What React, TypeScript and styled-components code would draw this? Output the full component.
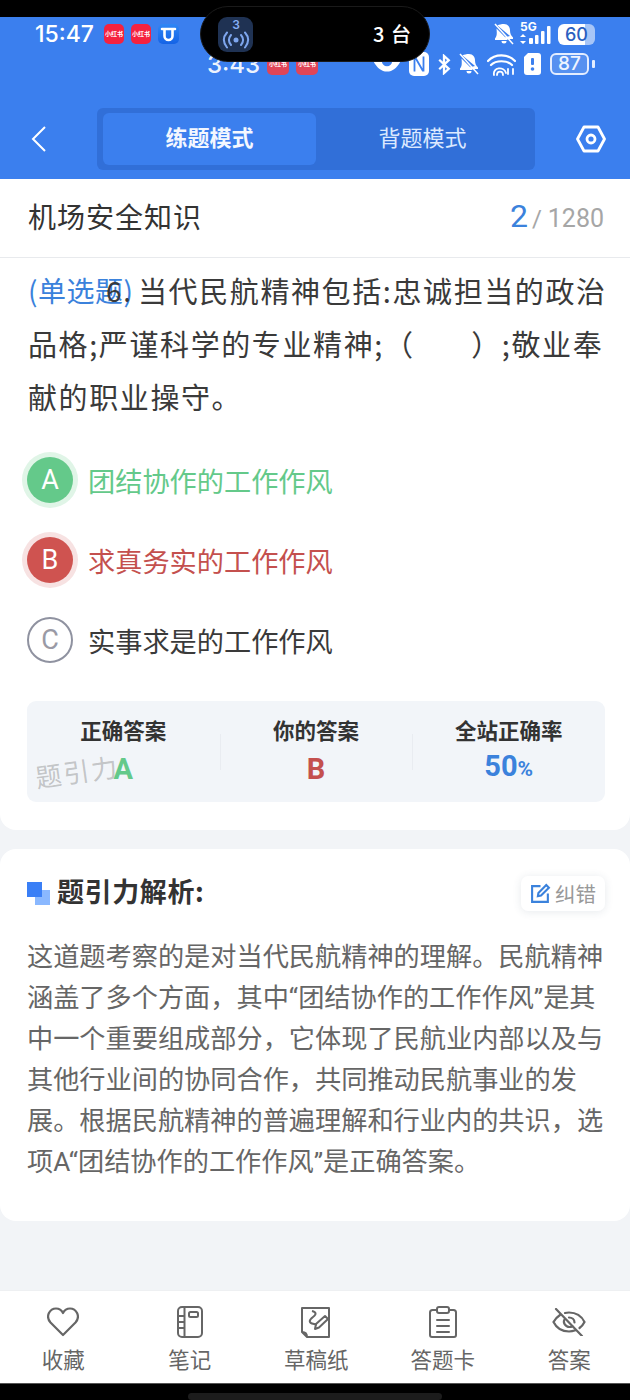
import React from "react";
import styled, { createGlobalStyle } from "styled-components";

const cjk = `"Noto Sans CJK SC", "Noto Sans", sans-serif`;

const GlobalStyle = createGlobalStyle`
  html, body {
    margin: 0;
    padding: 0;
    background: #f2f4f7;
  }
  * { box-sizing: border-box; }
`;

const Page = styled.div`
  position: relative;
  width: 630px;
  height: 1400px;
  overflow: hidden;
  background: #f2f4f7;
  font-family: ${cjk};
  display: flex;
  flex-direction: column;
`;

const TopBlack = styled.div`
  height: 17px;
  background: #000;
  flex: none;
`;

const Header = styled.header`
  height: 162px;
  flex: none;
  background: #3b7fee;
  display: flex;
  flex-direction: column;
  color: #fff;
`;

const StatusRow = styled.div`
  height: 34px;
  display: flex;
  align-items: center;
  justify-content: space-between;
  padding: 0 35px 0 35px;
`;

const StatusGroup = styled.div<{ $gap?: number }>`
  display: flex;
  align-items: center;
  gap: ${(p) => p.$gap ?? 7}px;
`;

const Clock = styled.span`
  font-family: Inter, Roboto, sans-serif;
  font-size: 23px;
  font-weight: 500;
  margin-right: 3px;
`;

const AppBadge = styled.span<{ $dim?: boolean }>`
  width: ${(p) => (p.$dim ? 22 : 20)}px;
  height: ${(p) => (p.$dim ? 22 : 20)}px;
  border-radius: 5px;
  background: ${(p) => (p.$dim ? "#e04558" : "#f5223f")};
  color: #fff;
  font-size: 6px;
  font-weight: 700;
  line-height: ${(p) => (p.$dim ? 22 : 20)}px;
  text-align: center;
  white-space: nowrap;
  overflow: hidden;
  flex: none;
`;

const ToolBadge = styled.span`
  width: 21px;
  height: 20px;
  border-radius: 5px;
  background: linear-gradient(180deg, #2f86f5, #1463e6);
  display: flex;
  align-items: center;
  justify-content: center;
  flex: none;
`;

const BatteryPill = styled.span`
  width: 37px;
  height: 21px;
  border-radius: 6px;
  background: linear-gradient(90deg, #fff 0 72%, rgba(255, 255, 255, 0.55) 72%);
  color: #2b5fc0;
  font-size: 18px;
  font-weight: 500;
  font-family: Inter, Roboto, sans-serif;
  line-height: 21px;
  text-align: center;
`;

const GhostRow = styled.div`
  height: 26px;
  display: flex;
  align-items: center;
  justify-content: space-between;
  padding: 0 35px 0 207px;
`;

const GhostClock = styled.span`
  font-family: Inter, Roboto, sans-serif;
  font-size: 24px;
  font-weight: 500;
  color: rgba(255, 255, 255, 0.92);
`;

const OutlineBattery = styled.span`
  width: 39px;
  height: 22px;
  border: 2px solid #e3edff;
  border-radius: 6px;
  background: rgba(255, 255, 255, 0.14);
  color: #eef4ff;
  font-size: 19px;
  font-weight: 500;
  font-family: Inter, Roboto, sans-serif;
  line-height: 18px;
  text-align: center;
  margin-left: 1px;
`;

const BatteryCap = styled.span`
  width: 3px;
  height: 8px;
  background: #e3edff;
  border-radius: 1px;
  margin-left: -5px;
`;

const Island = styled.div`
  position: absolute;
  left: 200px;
  top: 6px;
  width: 230px;
  height: 56px;
  border-radius: 28px;
  background: #000;
  border: 1px solid #1a1a1a;
  display: flex;
  align-items: center;
  justify-content: space-between;
  padding: 0 17px 0 17px;
`;

const IslandIcon = styled.div`
  width: 35px;
  height: 35px;
  border-radius: 9px;
  background: #1f3253;
  display: flex;
  align-items: center;
  justify-content: center;
`;

const IslandText = styled.span`
  color: #fff;
  font-size: 20px;
  font-weight: 500;
  letter-spacing: 1px;
  line-height: 24px;
`;

const NavBar = styled.div`
  margin-top: 31px;
  height: 62px;
  display: flex;
  align-items: center;
  padding: 0 22px 0 31px;
`;

const BackButton = styled.div`
  width: 66px;
  display: flex;
  align-items: center;
`;

const ModeTabs = styled.div`
  width: 438px;
  height: 62px;
  padding: 5px 6px;
  border-radius: 6px;
  background: #316fd8;
  display: flex;
`;

const ModeTab = styled.div<{ $active?: boolean }>`
  flex: 1;
  border-radius: 6px;
  padding-bottom: 7px;
  background: ${(p) => (p.$active ? "#3b7fee" : "transparent")};
  color: ${(p) => (p.$active ? "#f3f7ff" : "#dce9ff")};
  font-size: 22px;
  font-weight: ${(p) => (p.$active ? 700 : 400)};
  display: flex;
  align-items: center;
  justify-content: center;
`;

const SettingButton = styled.div`
  margin-left: 41px;
  display: flex;
`;

const QuestionCard = styled.section`
  flex: none;
  height: 651px;
  background: #fff;
  border-radius: 0 0 16px 16px;
  display: flex;
  flex-direction: column;
`;

const TitleRow = styled.div`
  height: 79px;
  flex: none;
  border-bottom: 1px solid #e8eaed;
  display: flex;
  align-items: center;
  justify-content: space-between;
  padding: 0 26px 4px 28px;
`;

const Title = styled.h1`
  margin: 0;
  font-size: 28px;
  font-weight: 400;
  letter-spacing: 1px;
  color: #333;
`;

const Progress = styled.div`
  display: flex;
  align-items: baseline;
  color: #a6a6a6;
  font-family: Roboto, sans-serif;
  font-size: 25px;
`;

const ProgressNow = styled.span`
  color: #3b82dc;
  font-size: 32px;
  margin-right: 4px;
`;

const ProgressSlash = styled.span`
  font-size: 24px;
  margin-right: 6px;
`;

const QuestionText = styled.div`
  position: relative;
  margin: 6px 0 0;
  padding: 0 0 0 28px;
  font-size: 29px;
  letter-spacing: 1.6px;
  line-height: 53px;
  color: #3a3a3a;
  white-space: nowrap;
`;

const QuestionType = styled.span`
  position: absolute;
  left: 28px;
  top: 0;
  font-size: 28px;
  letter-spacing: 0.5px;
  color: #3b82dc;
`;

const QuestionNo = styled.span`
  position: absolute;
  left: 106px;
  top: 0;
  font-size: 28px;
`;

const QuestionLine = styled.span<{ $first?: boolean }>`
  display: block;
  padding-left: ${(p) => (p.$first ? "110px" : "0")};
`;

const OptionList = styled.div`
  margin-top: 34px;
  padding-left: 27px;
  display: flex;
  flex-direction: column;
  gap: 35px;
`;

const OptionRow = styled.div`
  height: 45px;
  display: flex;
  align-items: center;
  gap: 15px;
`;

type Tone = "right" | "wrong" | "plain";

const circleBg: Record<Tone, string> = { right: "#64c98a", wrong: "#cf5350", plain: "#fff" };
const circleRing: Record<Tone, string> = { right: "#e0f5e7", wrong: "#f7e2e2", plain: "transparent" };
const optionColor: Record<Tone, string> = { right: "#64c98a", wrong: "#c4504e", plain: "#3a3a3a" };

const OptionCircle = styled.span<{ $tone: Tone }>`
  width: 46px;
  height: 46px;
  border-radius: 50%;
  flex: none;
  background: ${(p) => circleBg[p.$tone]};
  box-shadow: 0 0 0 5px ${(p) => circleRing[p.$tone]};
  border: ${(p) => (p.$tone === "plain" ? "2px solid #8f92a0" : "none")};
  color: ${(p) => (p.$tone === "plain" ? "#9a9aa5" : "#fff")};
  font-family: Roboto, sans-serif;
  font-size: 27px;
  display: flex;
  align-items: center;
  justify-content: center;
`;

const OptionText = styled.span<{ $tone: Tone }>`
  font-size: 27.2px;
  line-height: 42px;
  color: ${(p) => optionColor[p.$tone]};
`;

const Summary = styled.div`
  position: relative;
  margin: 39px 25px 0 27px;
  height: 101px;
  background: #f2f5f9;
  border-radius: 9px;
  display: grid;
  grid-template-columns: repeat(3, 1fr);
  align-items: center;
`;

const SummaryCell = styled.div<{ $divider?: boolean }>`
  position: relative;
  height: 66px;
  margin-top: -2px;
  display: flex;
  flex-direction: column;
  align-items: center;
  justify-content: space-between;
  &::before {
    content: "";
    display: ${(p) => (p.$divider ? "block" : "none")};
    position: absolute;
    left: 0;
    top: 16px;
    width: 1px;
    height: 36px;
    background: #e9ecf1;
  }
`;

const SummaryLabel = styled.span`
  font-size: 21.5px;
  line-height: 24px;
  font-weight: 700;
  color: #333;
`;

const SummaryValue = styled.span<{ $color: string }>`
  font-family: Roboto, sans-serif;
  font-size: 29px;
  line-height: 30px;
  font-weight: 700;
  color: ${(p) => p.$color};
  small {
    font-size: 21px;
    font-weight: 700;
  }
`;

const Watermark = styled.span`
  position: absolute;
  left: 8px;
  top: 54px;
  font-size: 26px;
  line-height: 32px;
  letter-spacing: 2px;
  color: rgba(120, 120, 120, 0.4);
  transform: rotate(-8deg);
  pointer-events: none;
`;

const AnalysisCard = styled.section`
  margin-top: 19px;
  flex: none;
  height: 372px;
  background: #fff;
  border-radius: 16px;
  padding: 26px 25px 0 27px;
`;

const AnalysisHead = styled.div`
  height: 36px;
  display: flex;
  align-items: center;
`;

const HeadMark = styled.span`
  position: relative;
  width: 23px;
  height: 23px;
  margin-right: 7px;
  flex: none;
  &::before {
    content: "";
    position: absolute;
    right: 0;
    bottom: 0;
    width: 15px;
    height: 15px;
    background: #8ab8ff;
  }
  &::after {
    content: "";
    position: absolute;
    left: 0;
    top: 0;
    width: 15px;
    height: 15px;
    background: #3a7ff6;
  }
`;

const AnalysisTitle = styled.h2`
  margin: 0;
  flex: 1;
  padding-bottom: 4px;
  font-size: 27px;
  line-height: 32px;
  font-weight: 700;
  letter-spacing: 0.6px;
  color: #333;
`;

const ReportButton = styled.div`
  width: 84px;
  height: 35px;
  border-radius: 7px;
  background: #fff;
  box-shadow: 0 1px 8px rgba(60, 80, 110, 0.12);
  display: flex;
  align-items: center;
  justify-content: center;
  gap: 4px;
  color: #999;
  font-size: 20.5px;
`;

const AnalysisBody = styled.p`
  margin: 26px 0 0;
  font-family: Roboto, ${cjk};
  font-size: 26.2px;
  line-height: 41px;
  color: #666;
`;

const Spacer = styled.div`
  flex: 1;
`;

const TabBar = styled.nav`
  flex: none;
  height: 93px;
  background: #fff;
  border-top: 1px solid #eef0f2;
  display: grid;
  grid-template-columns: repeat(5, 126.5px);
`;

const TabItem = styled.div`
  display: flex;
  flex-direction: column;
  align-items: center;
  padding-top: 14px;
  color: #666;
  font-size: 21.5px;
  line-height: 28px;
`;

const TabIcon = styled.span`
  height: 33px;
  margin-bottom: 7px;
  display: flex;
  align-items: center;
  justify-content: center;
`;

const BottomBlack = styled.div`
  position: relative;
  flex: none;
  height: 17px;
  background: #000;
  border-top: 1px solid #555;
`;

const HomeBar = styled.div`
  position: absolute;
  left: 188px;
  top: 9px;
  width: 254px;
  height: 7px;
  border-radius: 4px;
  background: #1c1c1c;
`;

const BellOff = () => (
  <svg width="20" height="22" viewBox="0 0 20 22" fill="#fff">
    <path d="M10 1c4 0 6 3 6 6.500 0 3 1 5 3 7v1.500H4.500L16 13 3.500 2.500C5 1.500 7.500 1 10 1zM2.500 5.500 14 17H1v-1.500c2-2 2-5 1.500-10z" />
    <path d="M7.500 18h5a2.500 2.500 0 0 1-5 0z" />
    <path d="M1 1l18 20" stroke="#fff" strokeWidth="1.500" />
  </svg>
);

const Signal = () => (
  <svg width="32" height="26" viewBox="0 0 32 26" fill="#fff" style={{ overflow: "visible" }}>
    <text x="0" y="10" fontSize="12" fontWeight="700" fontFamily="Inter, sans-serif">5G</text>
    <path d="M3 13l3 3H0zM3 23l3-3H0z" />
    <rect x="9" y="17" width="4" height="6" rx="1" />
    <rect x="15" y="14" width="3.500" height="9" rx="1" />
    <rect x="21" y="10" width="3.500" height="13" rx="1" />
    <rect x="27" y="5" width="3.500" height="18" rx="1" />
  </svg>
);

const ChainIcon = () => (
  <svg width="17" height="17" viewBox="0 0 17 17" fill="none" stroke="#fff" strokeWidth="2.600" strokeLinecap="round">
    <path d="M2 3h13M4.500 3v7a4 4 0 0 0 8 0V3" />
  </svg>
);

const BroadcastIcon = () => (
  <svg width="30" height="33" viewBox="0 0 30 33" fill="none" stroke="#7ea6ee" strokeWidth="2" strokeLinecap="round">
    <text x="15" y="10.500" textAnchor="middle" fontSize="12" fontWeight="600" fill="#86aef5" stroke="none" fontFamily="Inter, sans-serif">3</text>
    <circle cx="15" cy="22" r="2.500" fill="#7ea6ee" stroke="none" />
    <path d="M10 17c-2.500 3-2.500 7 0 10M20 17c2.500 3 2.500 7 0 10M6 14.500c-4 4.500-4 10 0 15M24 14.500c4 4.500 4 10 0 15" />
  </svg>
);

const EyeFilled = () => (
  <svg width="28" height="20" viewBox="0 0 30 20" fill="#fff">
    <path d="M1 8c3.500-5 8-7 14-7s10.500 2 14 7c-3.500 6-8 10-14 10S4.500 14 1 8z" />
    <circle cx="15" cy="7" r="5.500" fill="#3b7fee" />
  </svg>
);

const NfcIcon = () => (
  <svg width="20" height="24" viewBox="0 0 20 24" fill="none">
    <rect x="0" y="0" width="20" height="24" rx="5" fill="#fff" />
    <path d="M5.500 4.500v15M14.500 4.500v15M6 5l8 14" stroke="#3b7fee" strokeWidth="1.800" />
  </svg>
);

const BluetoothIcon = () => (
  <svg width="14" height="21" viewBox="0 0 14 22" fill="none" stroke="#fff" strokeWidth="2.400">
    <path d="M2 6l10 9.500L7 20V2l5 4.500L2 16" />
  </svg>
);

const WifiIcon = () => (
  <svg width="29" height="24" viewBox="0 0 29 24" fill="none" stroke="#fff" strokeWidth="1.800" strokeLinecap="round">
    <path d="M1 9c7-7.500 20-7.500 27 0M4 13c5-5 16-5 21 0" strokeWidth="2.200" />
    <path d="M7 23c-1.500-8 10-9 12-2M10 23c0-4.500 6-4.500 6 0" />
    <path d="M21 17v5M26 17v5" />
  </svg>
);

const SimAlert = () => (
  <svg width="17" height="22" viewBox="0 0 17 22">
    <path d="M4 0h10a3 3 0 0 1 3 3v16a3 3 0 0 1-3 3H3a3 3 0 0 1-3-3V4z" fill="#fff" />
    <rect x="7" y="5" width="3" height="7" rx="1" fill="#3b7fee" />
    <circle cx="8.500" cy="16" r="1.800" fill="#3b7fee" />
  </svg>
);

const BackIcon = () => (
  <svg width="16" height="26" viewBox="0 0 16 26" fill="none" stroke="#fff" strokeWidth="2">
    <path d="M14 1 2 13l12 12" />
  </svg>
);

const SettingIcon = () => (
  <svg width="30" height="28" viewBox="0 0 30 28" fill="none" stroke="#fff" strokeWidth="2.800" strokeLinejoin="round">
    <path d="M8 2h14l6.500 12L22 26H8L1.500 14z" />
    <circle cx="15" cy="14" r="4" />
  </svg>
);

const EditIcon = () => (
  <svg width="21" height="21" viewBox="0 0 20 20" fill="none" stroke="#3b82dc" strokeWidth="2">
    <path d="M10 3H2v15h15v-8" />
    <path d="M8 9.500 15.500 2 18 4.500 10.500 12l-3 .5z" />
  </svg>
);

const HeartIcon = () => (
  <svg width="32" height="30" viewBox="0 0 32 30" fill="none" stroke="#666" strokeWidth="2.200" strokeLinejoin="round">
    <path d="M16 28 3.500 15.500C-2 9 3 1.500 9 1.500c3 0 5.500 1.500 7 4.500 1.500-3 4-4.500 7-4.500 6 0 11 7.500 5.500 14z" />
  </svg>
);

const NotebookIcon = () => (
  <svg width="26" height="32" viewBox="0 0 26 32" fill="none" stroke="#666" strokeWidth="2">
    <rect x="1" y="1" width="24" height="30" rx="4" />
    <path d="M7.500 1v30M1 10h6.500M1 16h6.500M1 22h6.500" />
    <rect x="12" y="6" width="9" height="5" rx="1.500" />
  </svg>
);

const DraftIcon = () => (
  <svg width="30" height="32" viewBox="0 0 30 32" fill="none" stroke="#666" strokeWidth="2" strokeLinejoin="round">
    <path d="M1 2h27v29H6l-5-5z" />
    <path d="M1 26c2 0 5 .5 5 5" />
    <path d="M11 5c4 1 5 3 1 6-4 3-5 6 1 7l3 .5" />
    <path d="M14 23l1-5 9-8 3 3-9 8.500z" />
  </svg>
);

const ClipboardIcon = () => (
  <svg width="28" height="32" viewBox="0 0 28 32" fill="none" stroke="#666" strokeWidth="2" strokeLinecap="round">
    <path d="M7 4H3.500A2.500 2.500 0 0 0 1 6.500V29a2 2 0 0 0 2 2h22a2 2 0 0 0 2-2V6.500A2.500 2.500 0 0 0 24.500 4H21" />
    <rect x="8" y="1" width="12" height="6" rx="2" />
    <path d="M8 14h12M8 20h12M8 26h12" />
  </svg>
);

const EyeSlashIcon = () => (
  <svg width="34" height="28" viewBox="0 0 34 28" fill="none" stroke="#666" strokeWidth="2.200" strokeLinecap="round">
    <path d="M8 7C5 9 3 11 1.500 14c3 6 8.500 9.500 15.500 9.500 2.500 0 4.500-.5 6.500-1.200M13 5c1.500-.4 2.800-.5 4-.5 7 0 12.500 3.500 15.500 9.500-1.200 2.500-3 4.500-5 6" />
    <path d="M12.500 11.500c-1.800 3 .8 7.500 5 7.500 1 0 2-.3 2.800-.8M17 9.500c3 0 5.500 2 5.500 5" />
    <path d="M4 1l26 27" />
  </svg>
);

const tabs = [
  { label: "收藏", icon: <HeartIcon /> },
  { label: "笔记", icon: <NotebookIcon /> },
  { label: "草稿纸", icon: <DraftIcon /> },
  { label: "答题卡", icon: <ClipboardIcon /> },
  { label: "答案", icon: <EyeSlashIcon /> },
];

const options: { key: string; text: string; tone: Tone }[] = [
  { key: "A", text: "团结协作的工作作风", tone: "right" },
  { key: "B", text: "求真务实的工作作风", tone: "wrong" },
  { key: "C", text: "实事求是的工作作风", tone: "plain" },
];

export default function App() {
  return (
    <Page>
      <GlobalStyle />
      <TopBlack />
      <Header>
        <StatusRow>
          <StatusGroup>
            <Clock>15:47</Clock>
            <AppBadge>小红书</AppBadge>
            <AppBadge>小红书</AppBadge>
            <ToolBadge>
              <ChainIcon />
            </ToolBadge>
          </StatusGroup>
          <StatusGroup $gap={6}>
            <BellOff />
            <Signal />
            <BatteryPill>60</BatteryPill>
          </StatusGroup>
        </StatusRow>
        <GhostRow>
          <StatusGroup>
            <GhostClock>3:43</GhostClock>
            <AppBadge $dim>小红书</AppBadge>
            <AppBadge $dim>小红书</AppBadge>
          </StatusGroup>
          <StatusGroup $gap={8}>
            <EyeFilled />
            <NfcIcon />
            <BluetoothIcon />
            <BellOff />
            <WifiIcon />
            <SimAlert />
            <OutlineBattery>87</OutlineBattery>
            <BatteryCap />
          </StatusGroup>
        </GhostRow>
        <NavBar>
          <BackButton>
            <BackIcon />
          </BackButton>
          <ModeTabs>
            <ModeTab $active>练题模式</ModeTab>
            <ModeTab>背题模式</ModeTab>
          </ModeTabs>
          <SettingButton>
            <SettingIcon />
          </SettingButton>
        </NavBar>
      </Header>
      <Island>
        <IslandIcon>
          <BroadcastIcon />
        </IslandIcon>
        <IslandText>3 台</IslandText>
      </Island>

      <QuestionCard>
        <TitleRow>
          <Title>机场安全知识</Title>
          <Progress>
            <ProgressNow>2</ProgressNow>
            <ProgressSlash>/</ProgressSlash>1280
          </Progress>
        </TitleRow>
        <QuestionText>
          <QuestionType>(单选题)</QuestionType>
          <QuestionNo>6.</QuestionNo>
          <QuestionLine $first>当代民航精神包括:忠诚担当的政治</QuestionLine>
          <QuestionLine>品格;严谨科学的专业精神;（&nbsp;&nbsp;&nbsp;&nbsp;&nbsp;&nbsp;&nbsp;）;敬业奉</QuestionLine>
          <QuestionLine>献的职业操守。</QuestionLine>
        </QuestionText>
        <OptionList>
          {options.map((o) => (
            <OptionRow key={o.key}>
              <OptionCircle $tone={o.tone}>{o.key}</OptionCircle>
              <OptionText $tone={o.tone}>{o.text}</OptionText>
            </OptionRow>
          ))}
        </OptionList>
        <Summary>
          <SummaryCell>
            <SummaryLabel>正确答案</SummaryLabel>
            <SummaryValue $color="#64c98a">A</SummaryValue>
          </SummaryCell>
          <SummaryCell $divider>
            <SummaryLabel>你的答案</SummaryLabel>
            <SummaryValue $color="#c4504e">B</SummaryValue>
          </SummaryCell>
          <SummaryCell $divider>
            <SummaryLabel>全站正确率</SummaryLabel>
            <SummaryValue $color="#3b82dc">
              50<small>%</small>
            </SummaryValue>
          </SummaryCell>
          <Watermark>题引力</Watermark>
        </Summary>
      </QuestionCard>

      <AnalysisCard>
        <AnalysisHead>
          <HeadMark />
          <AnalysisTitle>题引力解析:</AnalysisTitle>
          <ReportButton>
            <EditIcon />
            纠错
          </ReportButton>
        </AnalysisHead>
        <AnalysisBody>
          这道题考察的是对当代民航精神的理解。民航精神涵盖了多个方面，其中“团结协作的工作作风”是其中一个重要组成部分，它体现了民航业内部以及与其他行业间的协同合作，共同推动民航事业的发展。根据民航精神的普遍理解和行业内的共识，选项A“团结协作的工作作风”是正确答案。
        </AnalysisBody>
      </AnalysisCard>

      <Spacer />
      <TabBar>
        {tabs.map((t) => (
          <TabItem key={t.label}>
            <TabIcon>{t.icon}</TabIcon>
            {t.label}
          </TabItem>
        ))}
      </TabBar>
      <BottomBlack>
        <HomeBar />
      </BottomBlack>
    </Page>
  );
}
